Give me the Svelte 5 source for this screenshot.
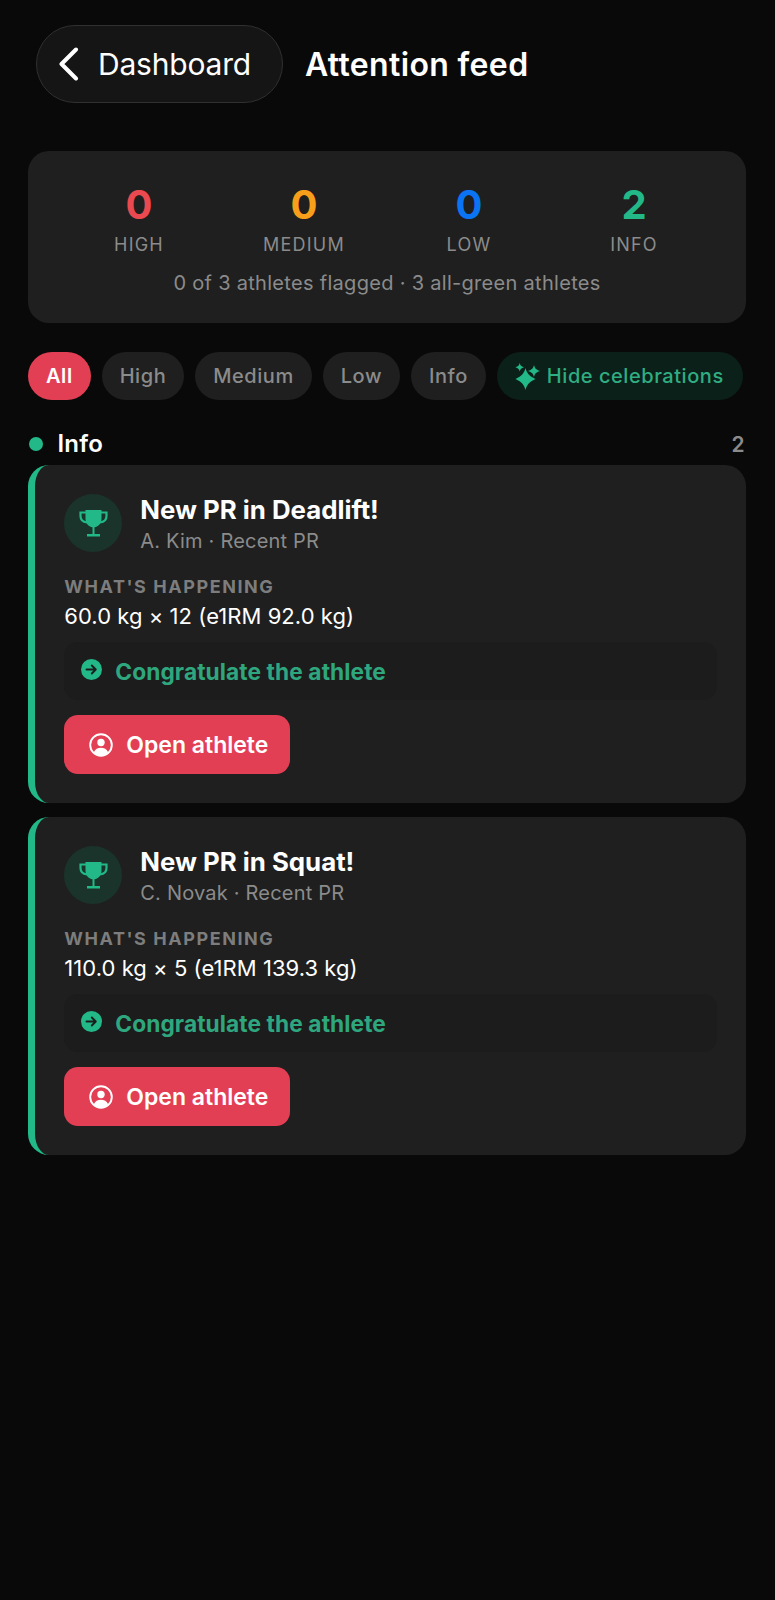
<script>
  const stats = [
    { n: 0, label: 'HIGH', c: 'red' },
    { n: 0, label: 'MEDIUM', c: 'orange' },
    { n: 0, label: 'LOW', c: 'blue' },
    { n: 2, label: 'INFO', c: 'green' }
  ];
  const chips = ['All', 'High', 'Medium', 'Low', 'Info'];
  const cards = [
    { title: 'New PR in Deadlift!', sub: 'A. Kim · Recent PR', body: '60.0 kg × 12 (e1RM 92.0 kg)' },
    { title: 'New PR in Squat!', sub: 'C. Novak · Recent PR', body: '110.0 kg × 5 (e1RM 139.3 kg)' }
  ];
</script>

<div class="page">
  <header class="top">
    <button class="back">
      <svg width="22" height="34" viewBox="0 0 22 34" fill="none"><path d="M19 2.500 4.500 17 19 31.500" stroke="#fff" stroke-width="4" stroke-linecap="round" stroke-linejoin="round"/></svg>
      <span>Dashboard</span>
    </button>
    <h1>Attention feed</h1>
  </header>

  <section class="summary">
    <div class="stats">
      {#each stats as s}
        <div class="stat">
          <div class="num {s.c}">{s.n}</div>
          <div class="lab">{s.label}</div>
        </div>
      {/each}
    </div>
    <p class="flag">0 of 3 athletes flagged · 3 all-green athletes</p>
  </section>

  <div class="chips">
    {#each chips as c, i}
      <button class="chip" class:on={i === 0}>{c}</button>
    {/each}
    <button class="chip hide">
      <svg width="25" height="27" viewBox="0 0 25 27" fill="#22b887"><path d="M10.500 5c1.200 4.900 3.500 7.900 10 11-6.500 3.100-8.800 6.100-10 11-1.200-4.900-3.500-7.900-10-11 6.500-3.100 8.800-6.100 10-11Z"/><path d="M19 2c.7 3 2 4.800 6 6-4 1.200-5.300 3-6 6-.7-3-2-4.800-6-6 4-1.200 5.300-3 6-6Z"/><path d="M4.700 0c.5 2.200 1.400 3.400 4.300 4.300-2.900.9-3.800 2.100-4.300 4.300C4.200 6.400 3.300 5.200.4 4.300 3.300 3.400 4.200 2.200 4.700 0Z"/></svg>
      Hide celebrations
    </button>
  </div>

  <div class="sechead">
    <span class="dot"></span>
    <span class="sectitle">Info</span>
    <span class="count">2</span>
  </div>

  <div class="list">
    {#each cards as card}
      <article class="card">
        <div class="cardtop">
          <div class="badge">
            <svg width="29" height="27" viewBox="0 0 29 27"><path d="M7 2.500H1.500v3.500c0 3.500 2.500 6 6.500 6.500M22 2.500h5.500v3.500c0 3.500-2.500 6-6.500 6.500" fill="none" stroke="#22b887" stroke-width="2.200"/><path d="M6.500 0h16v8.500c0 4.800-3 8-7 8.800V24h5.500v2.500H8V24h5.500v-6.700c-4-.8-7-4-7-8.800V0Z" fill="#22b887"/></svg>
          </div>
          <div class="heads">
            <h2>{card.title}</h2>
            <div class="sub">{card.sub}</div>
          </div>
        </div>
        <div class="wh">WHAT'S HAPPENING</div>
        <div class="body">{card.body}</div>
        <div class="action">
          <svg class="arrow" width="21" height="21" viewBox="0 0 21 21"><circle cx="10.500" cy="10.500" r="10.500" fill="#22b887"/><path d="M5.500 10.500h9M10.800 6.500l4 4-4 4" fill="none" stroke="#1a1f1d" stroke-width="1.900" stroke-linecap="round" stroke-linejoin="round"/></svg>
          <span>Congratulate the athlete</span>
        </div>
        <button class="open">
          <svg width="24" height="24" viewBox="0 0 24 24"><circle cx="12" cy="12" r="10.800" fill="none" stroke="#fff" stroke-width="1.900"/><circle cx="12" cy="9.500" r="3.700" fill="#fff"/><path d="M4.800 19.200c1.400-3 4-4.400 7.200-4.400s5.800 1.400 7.200 4.400c-1.800 1.900-4.400 3.300-7.200 3.300s-5.400-1.400-7.200-3.300Z" fill="#fff"/></svg>
          Open athlete
        </button>
      </article>
    {/each}
  </div>
</div>

<style>
  :global(body) {
    margin: 0;
    background: #090909;
  }
  .page {
    height: 1600px;
    box-sizing: border-box;
    padding: 25px 29px 0 28px;
    background: #090909;
    font-family: Inter, "Liberation Sans", sans-serif;
    color: #fff;
    overflow: hidden;
  }
  button {
    font-family: inherit;
    border: none;
    padding: 0;
  }
  .top {
    display: flex;
    align-items: center;
    gap: 22px;
    padding-left: 8px;
  }
  .back {
    display: flex;
    align-items: center;
    gap: 19px;
    box-sizing: border-box;
    width: 247px;
    height: 78px;
    padding-left: 20px;
    border-radius: 39px;
    border: 1.500px solid #303030;
    background: #151515;
    color: #fff;
    font-size: 30px;
    letter-spacing: -0.2px;
  }
  h1 {
    margin: 0;
    font-size: 32px;
    font-weight: 600;
    letter-spacing: 0.35px;
  }
  .summary {
    box-sizing: border-box;
    height: 172px;
    margin-top: 48px;
    padding-top: 30px;
    background: #1f1f1f;
    border-radius: 21px;
  }
  .stats {
    display: grid;
    grid-template-columns: repeat(4, 165px);
    justify-content: center;
    padding-right: 1px;
  }
  .stat {
    text-align: center;
  }
  .num {
    font-size: 40px;
    font-weight: 700;
    line-height: 48px;
  }
  .red { color: #ea4a4f; }
  .orange { color: #f79f1a; }
  .blue { color: #0a74f5; }
  .green { color: #22b887; }
  .lab {
    margin-top: 5px;
    font-size: 18px;
    line-height: 22px;
    letter-spacing: 1.2px;
    color: #8b8b8b;
  }
  .flag {
    margin: 13px 0 0;
    text-align: center;
    font-size: 20px;
    line-height: 28px;
    letter-spacing: 0.3px;
    color: #8b8b8b;
  }
  .chips {
    display: flex;
    gap: 11px;
    margin-top: 29px;
    white-space: nowrap;
  }
  .chip {
    display: flex;
    flex: none;
    align-items: center;
    height: 48px;
    padding: 0 18px;
    border-radius: 24px;
    background: #1f1f1f;
    color: #8b8b8b;
    font-size: 20px;
    font-weight: 500;
    letter-spacing: 0.55px;
  }
  .chip.on {
    background: #e33f54;
    color: #fff;
    font-weight: 600;
  }
  .chip.hide {
    gap: 7px;
    padding: 0 19px 0 18px;
    background: #0b2019;
    color: #30ad82;
  }
  .sechead {
    display: flex;
    align-items: center;
    margin-top: 29px;
    height: 30px;
  }
  .dot {
    width: 14px;
    height: 14px;
    margin-left: 1px;
    border-radius: 50%;
    background: #22b887;
  }
  .sectitle {
    margin: 0 0 2px 14.500px;
    font-size: 24px;
    font-weight: 600;
    letter-spacing: 0.2px;
  }
  .count {
    margin-left: auto;
    margin-right: 1.500px;
    font-size: 21px;
    font-weight: 600;
    color: #8b8b8b;
  }
  .list {
    display: flex;
    flex-direction: column;
    gap: 14px;
    margin-top: 6px;
  }
  .card {
    box-sizing: border-box;
    height: 338px;
    padding: 29px 29px 0 29.300px;
    background: #1f1f1f;
    border-left: 7px solid #22b887;
    border-radius: 21px;
  }
  .cardtop {
    display: flex;
    gap: 18px;
  }
  .badge {
    display: flex;
    align-items: center;
    justify-content: center;
    width: 58px;
    height: 58px;
    border-radius: 50%;
    background: #1a342b;
  }
  .heads {
    margin-top: -1px;
  }
  h2 {
    margin: 0;
    font-size: 25.800px;
    font-weight: 700;
    line-height: 34px;
  }
  .sub {
    margin-top: 1px;
    font-size: 20px;
    line-height: 26px;
    letter-spacing: 0.2px;
    color: #8b8b8b;
  }
  .wh {
    margin-top: 21px;
    font-size: 18px;
    font-weight: 700;
    line-height: 24px;
    letter-spacing: 1.55px;
    color: #7d7d7d;
  }
  .body {
    margin-top: 2px;
    font-size: 22px;
    line-height: 30px;
    letter-spacing: 0.05px;
  }
  .action {
    display: flex;
    align-items: flex-start;
    gap: 13px;
    box-sizing: border-box;
    height: 58px;
    margin-top: 11px;
    padding: 16px 17px 0;
    background: #1c1c1d;
    border-radius: 14px;
    color: #2fa77e;
    font-size: 22.700px;
    font-weight: 700;
    letter-spacing: 0.1px;
  }
  .arrow {
    flex: none;
    margin-top: 1px;
  }
  .open {
    display: flex;
    align-items: center;
    gap: 13px;
    width: 226px;
    height: 59px;
    margin-top: 15px;
    padding-left: 25px;
    box-sizing: border-box;
    background: #e33f54;
    border-radius: 14px;
    color: #fff;
    font-size: 23px;
    font-weight: 600;
  }
</style>
